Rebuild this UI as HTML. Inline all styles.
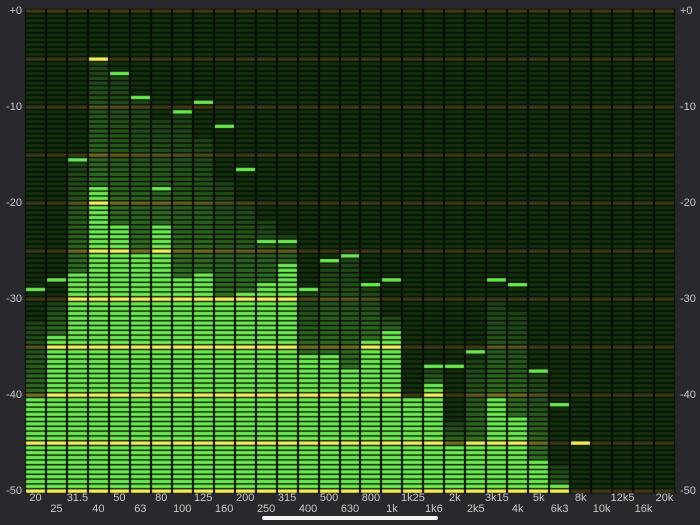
<!DOCTYPE html>
<html><head><meta charset="utf-8"><style>
html,body{margin:0;padding:0;background:#29292d;width:700px;height:525px;overflow:hidden;font-family:"Liberation Sans",sans-serif}
canvas{position:absolute;left:0;top:0}
.l{position:absolute;color:#c9c9c9;font-size:11px;line-height:12px;white-space:nowrap}
.bar{position:absolute;left:262px;top:516px;width:176px;height:4px;border-radius:2px;background:#f4f4f4}
</style></head><body>
<canvas id="c" width="700" height="525"></canvas>
<div id="labels"></div>
<div class="bar"></div>
<script>
var c=document.getElementById('c'),g=c.getContext('2d');
var X0=25,X1=675,N=31,W=(X1-X0)/N,P=4.8,Y0=9.4,R=101;
var d=[[288,400,320],[279,333,300],[159,273,163],[58,187,60],[73,225,76],[97,253,100],[188,225,120],[112,277,115],[102,273,140],[126,297,180],[168,292,200],[240,282,220],[240,263,235],[288,353,290],[259,353,262],[254,367,257],[283,338,288],[278,330,315],[397,401,397],[364,382,367],[364,444,420],[350,441,357],[278,397,300],[283,416,313],[369,459,370],[403,486,467],[441,999,999],[999,999,999],[999,999,999],[999,999,999],[999,999,999]];
g.fillStyle='#070b04';g.fillRect(X0,Y0-0.7,X1-X0,R*P);
for(var b=0;b<N;b++){
 var x=Math.round(X0+b*W)+1,w=Math.round(X0+(b+1)*W)-x-1;
 var pk=d[b][0],br=d[b][1],md=d[b][2];
 var pr=Math.round((pk-Y0)/P);
 for(var r=0;r<R;r++){
  var y=Y0+r*P,yl=(r%10==0);
  var col;
  if(y>=br-2||r==pr){col=yl?'#f8f55a':'#6df04f';}
  else if(y>=md-2){
   var t=(br-md)>0?(y-md)/(br-md):1;t=Math.max(0,Math.min(1,t));
   var k=0.6+0.4*t;
   col=yl?'rgb('+Math.round(120*k)+','+Math.round(118*k)+','+Math.round(35*k)+')':'rgb('+Math.round(50*k)+','+Math.round(115*k)+','+Math.round(35*k)+')';
  } else {col=yl?'#3e3b10':'#12300b';}
  g.fillStyle=col;g.fillRect(x,y,w,3.4);
 }
}
var L=document.getElementById('labels'),h='';
var db=['+0','-10','-20','-30','-40','-50'];
for(var i=0;i<6;i++){var yy=Y0+i*20*P-4.5;
 h+='<div class="l" style="right:678px;top:'+yy+'px">'+db[i]+'</div>';
 h+='<div class="l" style="left:680px;top:'+yy+'px">'+db[i]+'</div>';}
var f=['20','25','31.5','40','50','63','80','100','125','160','200','250','315','400','500','630','800','1k','1k25','1k6','2k','2k5','3k15','4k','5k','6k3','8k','10k','12k5','16k','20k'];
for(var b=0;b<N;b++){var cx=X0+(b+0.5)*W;var yy=b%2?503:492;
 h+='<div class="l" style="left:'+(cx-30)+'px;width:60px;text-align:center;top:'+yy+'px">'+f[b]+'</div>';}
L.innerHTML=h;
</script>
</body></html>
